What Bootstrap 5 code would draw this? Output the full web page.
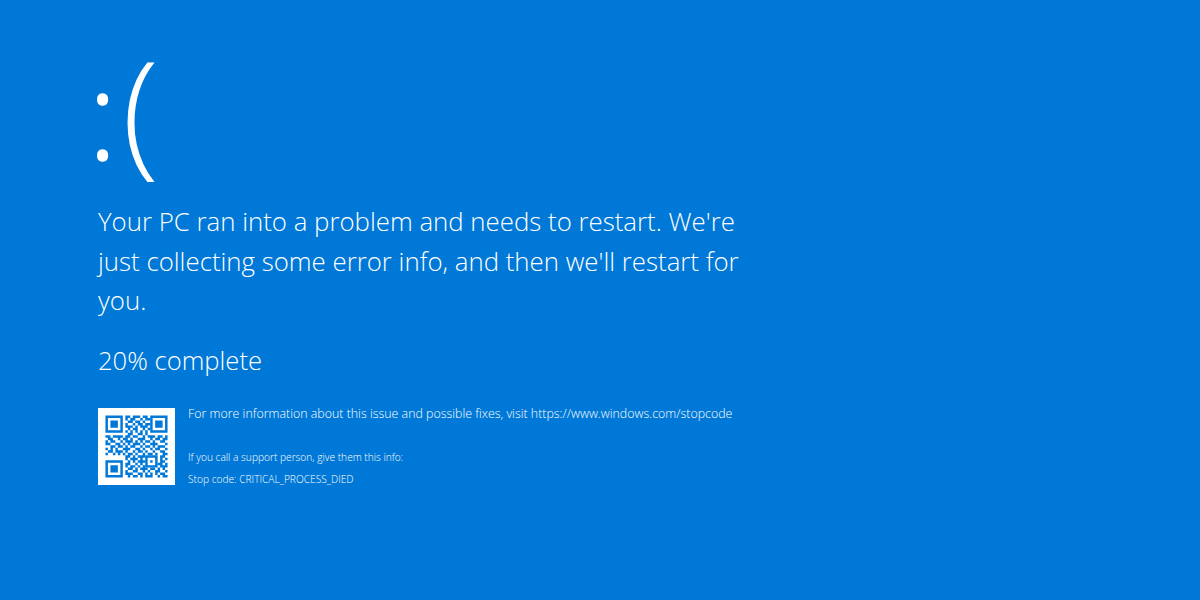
<!DOCTYPE html>
<html lang="en">
<head>
<meta charset="utf-8">
<title>Stop code</title>
<link href="https://cdn.jsdelivr.net/npm/bootstrap@5.3.0/dist/css/bootstrap.min.css" rel="stylesheet">
<style>
html,body{height:100%;margin:0}
body.bsod-screen{background:#0078d7;color:#fff;font-family:"Open Sans","Liberation Sans",sans-serif;font-weight:300;overflow:hidden}
.bsod-wrap{padding:34px 0 0 98px}
.bsod-face{line-height:160px;height:160px;padding-top:40px;margin:0 0 0 -10px}
.bsod-colon{font-size:122px;font-weight:300;line-height:0;-webkit-text-stroke:1.5px #fff}
.bsod-paren{font-size:136px;font-weight:300;line-height:0;margin-left:5px}
.bsod-msg{font-size:25.8px;line-height:39.5px;margin:8px 0 0}
.bsod-progress{font-size:25.6px;line-height:40px;margin:20px 0 0}
.bsod-info{margin-top:27px}
.bsod-qr{width:77px;height:77px;flex:none;display:block}
.bsod-details{margin-left:13px}
.bsod-more{font-size:12.4px;line-height:18px;margin:-3px 0 0}
.bsod-support{font-size:10.2px;line-height:16px;margin:26px 0 0}
.bsod-code{font-size:10.2px;line-height:16px;margin:6px 0 0}
</style>
</head>
<body class="bsod-screen">
<main class="bsod-wrap">
<div class="bsod-face"><span class="bsod-colon">:</span><span class="bsod-paren">(</span></div>
<p class="bsod-msg">Your PC ran into a problem and needs to restart. We're<br>just collecting some error info, and then we'll restart for<br>you.</p>
<p class="bsod-progress">20% complete</p>
<div class="bsod-info d-flex">
<svg class="bsod-qr" viewBox="-3 -3 31 31" aria-label="QR code" role="img">
<rect x="-3" y="-3" width="31" height="31" fill="#fff"/>
<path fill="#0078d7" fill-rule="evenodd" d="M0 0h7v7h-7zM1 1v5h5v-5zM2 2h3v3h-3zM18 0h7v7h-7zM19 1v5h5v-5zM20 2h3v3h-3zM0 18h7v7h-7zM1 19v5h5v-5zM2 20h3v3h-3zM16 16h5v5h-5zM17 17v3h3v-3zM18 18h1v1h-1z"/>
<path stroke="#0078d7" stroke-width="1" fill="none" transform="translate(0 .5)" d="M8 0h2M11 0h3M15 0h2M8 1h1M10 1h2M14 1h1M16 1h2M9 2h2M12 2h2M15 2h1M8 3h1M11 3h1M13 3h2M16 3h2M8 4h3M12 4h1M14 4h3M9 5h1M11 5h2M15 5h1M17 5h1M8 6h1M10 6h1M12 6h1M14 6h1M16 6h1M9 7h2M13 7h2M16 7h1M0 8h2M3 8h4M8 8h2M11 8h2M15 8h1M17 8h3M21 8h2M24 8h1M1 9h2M5 9h1M7 9h2M10 9h1M13 9h3M18 9h1M20 9h2M23 9h2M0 10h1M2 10h2M6 10h1M8 10h3M12 10h1M14 10h1M16 10h2M19 10h1M22 10h2M0 11h2M4 11h2M7 11h1M9 11h1M11 11h3M15 11h1M18 11h3M24 11h1M2 12h2M5 12h2M8 12h1M10 12h2M14 12h1M16 12h2M19 12h1M21 12h3M0 13h1M2 13h1M4 13h1M7 13h3M12 13h2M15 13h1M18 13h1M20 13h2M24 13h1M1 14h2M4 14h3M8 14h1M11 14h1M13 14h2M16 14h1M19 14h1M22 14h2M0 15h1M3 15h1M5 15h1M7 15h1M9 15h2M12 15h1M15 15h1M17 15h2M20 15h1M23 15h2M8 16h2M11 16h1M13 16h3M22 16h2M8 17h1M10 17h3M14 17h1M22 17h1M24 17h1M9 18h1M11 18h1M13 18h3M22 18h2M8 19h2M12 19h1M14 19h1M21 19h2M24 19h1M8 20h1M10 20h2M13 20h1M15 20h1M22 20h3M9 21h2M12 21h1M14 21h3M18 21h2M21 21h1M23 21h1M8 22h1M11 22h2M15 22h1M17 22h1M20 22h2M24 22h1M8 23h3M13 23h2M16 23h1M18 23h1M20 23h1M22 23h2M9 24h1M11 24h2M14 24h1M16 24h3M21 24h1M23 24h2"/>
</svg>
<div class="bsod-details">
<p class="bsod-more">For more information about this issue and possible fixes, visit https://www.windows.com/stopcode</p>
<p class="bsod-support">If you call a support person, give them this info:</p>
<p class="bsod-code">Stop code: CRITICAL_PROCESS_DIED</p>
</div>
</div>
</main>
</body>
</html>
